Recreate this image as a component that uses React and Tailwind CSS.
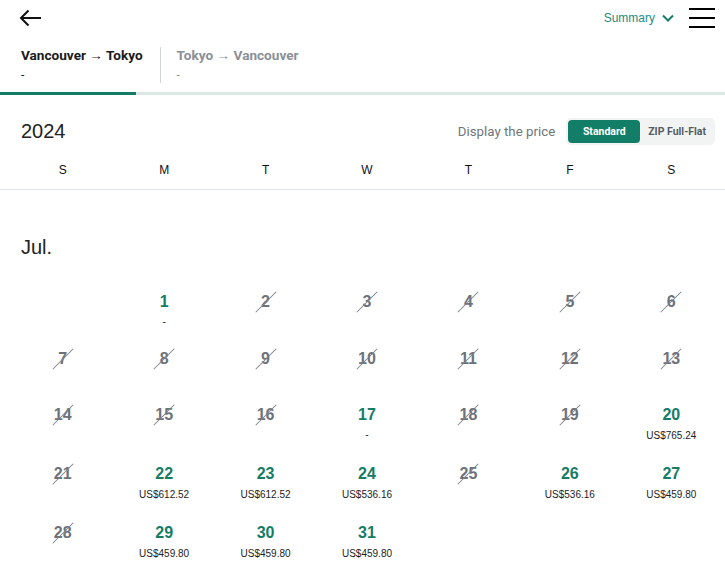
import { useState } from 'react'

const WEEKDAYS = ['S', 'M', 'T', 'W', 'T', 'F', 'S']

// July 2024 fares; null = sold out, '-' = open without a fare shown
const FARES = {
  1: '-',
  17: '-',
  20: 'US$765.24',
  22: 'US$612.52',
  23: 'US$612.52',
  24: 'US$536.16',
  26: 'US$536.16',
  27: 'US$459.80',
  29: 'US$459.80',
  30: 'US$459.80',
  31: 'US$459.80',
}

function buildWeeks() {
  const cells = [null]
  for (let d = 1; d <= 31; d++) cells.push(d)
  while (cells.length % 7) cells.push(null)
  const weeks = []
  for (let i = 0; i < cells.length; i += 7) weeks.push(cells.slice(i, i + 7))
  return weeks
}

function DayCell({ day }) {
  if (!day) return <div className="min-h-[56px]" />
  const fare = FARES[day]
  const open = fare !== undefined

  return (
    <div className="flex min-h-[56px] flex-col items-center pt-[10px] pb-[11px]">
      <span
        className={`relative text-[16px] font-bold leading-[20px] ${
          open ? 'text-[#157c66]' : 'text-[#6d727a]'
        }`}
      >
        {day}
        {!open && (
          <span className="absolute left-1/2 top-1/2 h-px w-[29px] -translate-x-1/2 -translate-y-1/2 -rotate-45 bg-[#7b818a]" />
        )}
      </span>
      {open && fare === '-' && (
        <span className="mt-[4px] text-[10px] leading-[12px] text-[#222]">-</span>
      )}
      {open && fare !== '-' && (
        <span className="mt-[4px] text-[10px] leading-[14px] text-[#222]">{fare}</span>
      )}
    </div>
  )
}

export default function App() {
  const [mode, setMode] = useState('standard')
  const weeks = buildWeeks()

  return (
    <div className="w-[725px] bg-white font-['Liberation_Sans',Arial,sans-serif] text-[#222]">
      {/* top bar */}
      <div className="flex h-[36px] items-center justify-between pl-[19px] pr-[10px]">
        <svg width="24" height="24" viewBox="0 0 24 24" fill="none" stroke="#111" strokeWidth="2">
          <path d="M2 12h20M9.5 4.5L2 12l7.5 7.5" />
        </svg>
        <div className="flex items-center">
          <span className="text-[12px] text-[#238b80]">Summary</span>
          <svg className="ml-[7px]" width="12" height="8" viewBox="0 0 12 8" fill="none" stroke="#177d6a" strokeWidth="2">
            <path d="M1 1.5l5 5 5-5" />
          </svg>
          <div className="ml-[15px] flex w-[26px] flex-col gap-[7px]">
            <span className="h-[2px] bg-black" />
            <span className="h-[2px] bg-black" />
            <span className="h-[2px] bg-black" />
          </div>
        </div>
      </div>

      {/* direction tabs */}
      <div className="flex px-[21px] pt-[11px] pb-[9px] font-['Roboto',sans-serif]">
        <div className="border-r border-[#cfd6d3] pr-[17px]">
          <div className="text-[13.6px] font-bold leading-[16px] text-[#1a1a1a]">Vancouver → Tokyo</div>
          <div className="mt-[4px] text-[12px] leading-[16px] text-[#1a1a1a]">-</div>
        </div>
        <div className="pl-[16px]">
          <div className="text-[13.6px] font-bold leading-[16px] text-[#8a9096]">Tokyo → Vancouver</div>
          <div className="mt-[4px] text-[12px] leading-[16px] text-[#8a9096]">-</div>
        </div>
      </div>
      <div className="h-[3px] bg-[#dbe8e3]">
        <div className="h-full w-[136px] bg-[#127c64]" />
      </div>

      {/* year + price toggle */}
      <div className="flex items-center justify-between pl-[21px] pr-[10px] pt-[23px]">
        <span className="text-[20px] leading-[27px]">2024</span>
        <div className="flex items-center">
          <span className="mr-[11px] font-['Roboto',sans-serif] text-[13.3px] text-[#6f767c]">Display the price</span>
          <div className="flex h-[27px] items-center rounded-[5px] bg-[#f2f4f3] p-[2px] pr-[9px] font-['Roboto',sans-serif] text-[10.5px] font-bold">
            <button
              type="button"
              onClick={() => setMode('standard')}
              className={`h-[23px] w-[72px] rounded-[4px] ${
                mode === 'standard' ? 'bg-[#127e67] text-white' : 'text-[#555c62]'
              }`}
            >
              Standard
            </button>
            <button
              type="button"
              onClick={() => setMode('zip')}
              className={`ml-[8px] h-[23px] ${mode === 'zip' ? 'text-[#127e67]' : 'text-[#555c62]'}`}
            >
              ZIP Full-Flat
            </button>
          </div>
        </div>
      </div>

      {/* weekday header */}
      <div className="grid grid-cols-7 border-b border-[#dfe6e3] px-[12px] pt-[17px] pb-[11px] pr-[3px]">
        {WEEKDAYS.map((d, i) => (
          <div key={i} className="text-center text-[12px] leading-[16px] text-[#111]">
            {d}
          </div>
        ))}
      </div>

      {/* month */}
      <div className="mt-[45px] pl-[21px] text-[20px] leading-[24px]">Jul.</div>
      <div className="mt-[23px] pl-[12px] pr-[3px]">
        {weeks.map((week, wi) => (
          <div key={wi} className="grid grid-cols-7">
            {week.map((day, di) => (
              <DayCell key={di} day={day} />
            ))}
          </div>
        ))}
      </div>
    </div>
  )
}
